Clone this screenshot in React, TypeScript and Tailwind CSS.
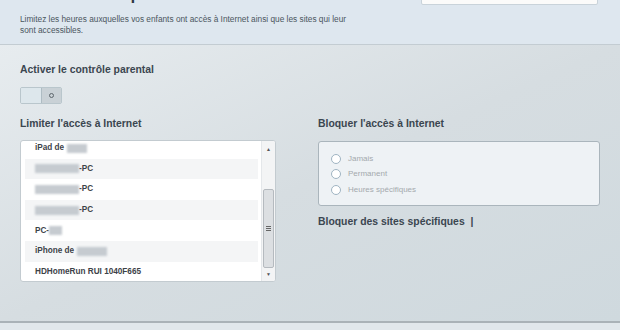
import React from 'react';

const devices: { pre?: string; blur?: number; post?: string; gap?: boolean }[] = [
  { pre: 'iPad de', blur: 20, gap: true },
  { blur: 44, post: '-PC' },
  { blur: 44, post: '-PC' },
  { blur: 44, post: '-PC' },
  { pre: 'PC-', blur: 13 },
  { pre: 'iPhone de', blur: 30, gap: true },
  { pre: 'HDHomeRun RUI 1040F665' },
];

const Blur = ({ w }: { w: number }) => (
  <span
    className="inline-block h-[9px] bg-[#c6cbd0] blur-[0.8px] align-middle"
    style={{ width: w }}
  />
);

const Radio = ({ label }: { label: string }) => (
  <div className="flex items-center gap-[7px] h-[15.5px]">
    <span className="w-[10px] h-[10px] rounded-full border border-[#9fb4c2] bg-white" />
    <span className="text-[8px] text-[#a4a9ad]">{label}</span>
  </div>
);

export default function App() {
  return (
    <div className="w-[620px] h-[330px] overflow-hidden bg-[#dfe6eb] font-['Liberation_Sans',Arial,sans-serif]">
      {/* header */}
      <div className="h-[45px] bg-[#dee7ef] border-b border-[#c3ccd2] flex justify-between px-5">
        <div>
          <div className="text-[26px] leading-[26px] -mt-[24px] text-[#2f3a44] tracking-[0.5px]">Contrôle parental</div>
          <p className="mt-[12px] w-[334px] text-[8.3px] leading-[11px] text-[#4b5660]">
            Limitez les heures auxquelles vos enfants ont accès à Internet ainsi que les sites qui leur sont accessibles.
          </p>
        </div>
        <div className="w-[177px] h-[30px] -mt-[25px] mr-[2px] bg-[#fbfbfa] border border-[#c9d3da] rounded-[2px]" />
      </div>

      {/* body */}
      <div className="h-[278px] bg-gradient-to-br from-[#e7ecef] via-[#d6dde1] to-[#cfd9de] border-b-2 border-[#aab2b7] px-5 pt-[18px]">
        <div className="text-[10.4px] font-bold text-[#3b4650] leading-[14px]">Activer le contrôle parental</div>
        <div className="mt-[10px] flex w-[42px] h-[17px] rounded-[2px] border border-[#b9c6cc] overflow-hidden">
          <div className="w-[21px] bg-[#dde7ec] border-r border-[#aebcc3]" />
          <div className="flex-1 bg-[#c9d1d6] flex items-center justify-center">
            <span className="w-[5px] h-[5px] rounded-full border border-[#5d666c]" />
          </div>
        </div>

        <div className="mt-[13px] flex gap-[42px]">
          {/* left column */}
          <div className="w-[256px]">
            <div className="text-[10.4px] font-bold text-[#3b4650] leading-[14px]">Limiter l'accès à Internet</div>
            <div className="mt-[9px] h-[142px] bg-white border border-[#c3cbd0] rounded-[3px] flex overflow-hidden">
              <div className="flex-1 pl-[4px] pr-[3px] -mt-[3px]">
                {devices.map((d, i) => (
                  <div
                    key={i}
                    className={`h-[20.6px] flex items-center pl-[10px] text-[8.2px] font-bold text-[#3d4248] ${i % 2 === 1 ? 'bg-[#f4f5f6]' : ''}`}
                  >
                    {d.pre && <span className={d.gap ? 'mr-[3px]' : ''}>{d.pre}</span>}
                    {d.blur && <Blur w={d.blur} />}
                    {d.post && <span>{d.post}</span>}
                  </div>
                ))}
              </div>
              <div className="w-[14px] border-l border-[#e4e7ea] bg-[#f3f4f5] flex flex-col items-center">
                <span className="mt-[4px] text-[5px] text-[#555] leading-[8px]">▲</span>
                <div className="mt-[36px] w-[11px] h-[79px] bg-[#dcdfe2] border border-[#b5babf] rounded-[2px] flex items-center justify-center">
                  <div className="flex flex-col gap-[1px]">
                    <span className="w-[5px] h-px bg-[#666]" />
                    <span className="w-[5px] h-px bg-[#666]" />
                    <span className="w-[5px] h-px bg-[#666]" />
                  </div>
                </div>
                <span className="mt-[2px] text-[5px] text-[#555] leading-[8px]">▼</span>
              </div>
            </div>
          </div>

          {/* right column */}
          <div className="w-[282px]">
            <div className="text-[10.4px] font-bold text-[#3b4650] leading-[14px]">Bloquer l'accès à Internet</div>
            <div className="mt-[10px] h-[65px] bg-[#eef2f5] border border-[#aab5bc] rounded-[3px] px-[12px] pt-[9px]">
              <Radio label="Jamais" />
              <Radio label="Permanent" />
              <Radio label="Heures spécifiques" />
            </div>
            <div className="mt-[9px] text-[10.4px] font-bold text-[#3b4650] leading-[14px]">
              Bloquer des sites spécifiques <span className="ml-[3px]">|</span>
            </div>
          </div>
        </div>
      </div>
      <div className="h-[7px] bg-[#e1e7eb]" />
    </div>
  );
}
